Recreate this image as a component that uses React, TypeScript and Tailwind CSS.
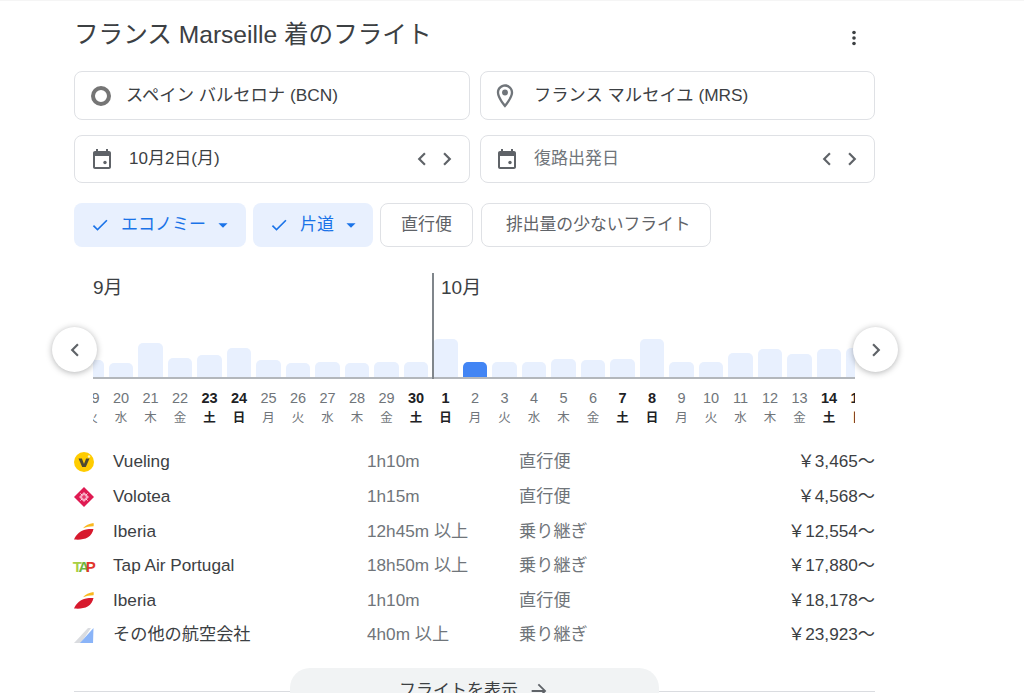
const FONT = "font-['Liberation_Sans','Noto_Sans_CJK_JP',sans-serif]";

const days = [
  { d: "19", w: "火", h: 17 },
  { d: "20", w: "水", h: 14 },
  { d: "21", w: "木", h: 34 },
  { d: "22", w: "金", h: 19 },
  { d: "23", w: "土", h: 22, bold: true },
  { d: "24", w: "日", h: 29, bold: true },
  { d: "25", w: "月", h: 17 },
  { d: "26", w: "火", h: 14 },
  { d: "27", w: "水", h: 15 },
  { d: "28", w: "木", h: 14 },
  { d: "29", w: "金", h: 15 },
  { d: "30", w: "土", h: 15, bold: true },
  { d: "1", w: "日", h: 38, bold: true },
  { d: "2", w: "月", h: 15, active: true },
  { d: "3", w: "火", h: 15 },
  { d: "4", w: "水", h: 15 },
  { d: "5", w: "木", h: 18 },
  { d: "6", w: "金", h: 17 },
  { d: "7", w: "土", h: 18, bold: true },
  { d: "8", w: "日", h: 38, bold: true },
  { d: "9", w: "月", h: 15 },
  { d: "10", w: "火", h: 15 },
  { d: "11", w: "水", h: 24 },
  { d: "12", w: "木", h: 28 },
  { d: "13", w: "金", h: 23 },
  { d: "14", w: "土", h: 28, bold: true },
  { d: "15", w: "日", h: 29, bold: true },
];

const flights = [
  { logo: <VuelingLogo />, name: "Vueling", time: "1h10m", stops: "直行便", price: "￥3,465〜" },
  { logo: <VoloteaLogo />, name: "Volotea", time: "1h15m", stops: "直行便", price: "￥4,568〜" },
  { logo: <IberiaLogo />, name: "Iberia", time: "12h45m 以上", stops: "乗り継ぎ", price: "￥12,554〜" },
  { logo: <TapLogo />, name: "Tap Air Portugal", time: "18h50m 以上", stops: "乗り継ぎ", price: "￥17,880〜" },
  { logo: <IberiaLogo />, name: "Iberia", time: "1h10m", stops: "直行便", price: "￥18,178〜" },
  { logo: <OtherLogo />, name: "その他の航空会社", time: "4h0m 以上", stops: "乗り継ぎ", price: "￥23,923〜" },
];

function VuelingLogo() {
  return (
    <svg width="20" height="20" viewBox="0 0 20 20">
      <circle cx="10" cy="10" r="10" fill="#fc0" />
      <path d="M4.500 6.500h3.400l2.100 5.600 2.100-5.600h3.400L11.800 15H8.200z" fill="#4d4a32" />
      <circle cx="15" cy="4.500" r="1.200" fill="#fff4bf" />
    </svg>
  );
}

function VoloteaLogo() {
  return (
    <svg width="20" height="20" viewBox="0 0 20 20">
      <path d="M10 0l10 10-10 10L0 10z" fill="#df1a52" />
      <path d="M10 5l5 5-5 5-5-5z" fill="#f7a8c0" />
      <path d="M10 7.800l2.200 2.200-2.200 2.200L7.800 10z" fill="#e8386c" />
      <path d="M6.500 6.500l1.200 1.200M13.500 6.500l-1.200 1.200M6.500 13.500l1.200-1.200M13.500 13.500l-1.200-1.200" stroke="#fff" strokeWidth="1" />
    </svg>
  );
}

function IberiaLogo() {
  return (
    <svg width="20" height="17" viewBox="0 0 20 17">
      <path d="M0 16.500C2 11.500 6.500 7.500 12 6.500c2.500-.5 5-.6 7.500-.5-.8 3.500-2.500 6.500-5.500 8.300-4 2.400-9 2.600-14 2.200z" fill="#d7192d" />
      <path d="M9 5.300C11.500 2.500 15 .6 19.500 0c.3 1 .3 2.200.1 3.200C15.500 3.200 12 4 9 5.300z" fill="#fab81e" />
    </svg>
  );
}

function TapLogo() {
  return (
    <span className="flex text-[15px] font-bold leading-none tracking-[-3.500px] pr-[3px]">
      <span className="text-[#a8cf45]">T</span>
      <span className="text-[#6fb53f]">A</span>
      <span className="text-[#e2372b]">P</span>
    </span>
  );
}

function OtherLogo() {
  return (
    <svg width="20" height="15" viewBox="0 0 20 15">
      <path d="M0 15L14 0h3L7 15z" fill="#dadce0" />
      <path d="M6 15L19.500 0 19 15z" fill="#8ab4f8" />
    </svg>
  );
}

function CalendarIcon() {
  return (
    <svg width="24" height="24" viewBox="0 0 24 24" fill="#5f6368" className="shrink-0">
      <path d="M19 4h-1V2h-2v2H8V2H6v2H5c-1.100 0-2 .9-2 2v14c0 1.100.9 2 2 2h14c1.100 0 2-.9 2-2V6c0-1.100-.9-2-2-2zm0 16H5V9h14v11z" />
      <circle cx="15" cy="15.500" r="1.700" />
    </svg>
  );
}

function Chevron({ right }: { right?: boolean }) {
  return (
    <svg width="26" height="26" viewBox="0 0 24 24" fill="#5f6368" className="shrink-0">
      <path d={right ? "M8.590 16.590L10 18l6-6-6-6-1.410 1.410L13.170 12z" : "M15.410 7.410L14 6l-6 6 6 6 1.410-1.410L10.830 12z"} />
    </svg>
  );
}

function Check() {
  return (
    <svg width="20" height="20" viewBox="0 0 24 24" fill="#1a73e8" className="shrink-0">
      <path d="M9 16.170L4.830 12l-1.420 1.410L9 19 21 7l-1.410-1.410z" />
    </svg>
  );
}

function Caret() {
  return (
    <svg width="22" height="22" viewBox="0 0 24 24" fill="#1a73e8" className="shrink-0">
      <path d="M7 10l5 5 5-5z" />
    </svg>
  );
}

function DateField({ label, placeholder, w, pl }: { label: string; placeholder?: boolean; w: string; pl: string }) {
  return (
    <div className={`${w} ${pl} h-[48px] flex items-center border border-[#dfe1e5] rounded-lg pr-[9px]`}>
      <CalendarIcon />
      <span className={`ml-[15px] text-[17px] ${placeholder ? "text-[#70757a]" : "text-[#3c4043]"}`}>{label}</span>
      <div className="ml-auto flex items-center -space-x-px">
        <Chevron />
        <Chevron right />
      </div>
    </div>
  );
}

function ActiveChip({ label, w }: { label: string; w: string }) {
  return (
    <div className={`${w} h-[44px] flex items-center bg-[#e8f0fe] rounded-lg pl-[16px] text-[#1a73e8] text-[17px]`}>
      <Check />
      <span className="ml-[11px]">{label}</span>
      <span className="ml-[6px]"><Caret /></span>
    </div>
  );
}

function NavButton({ right }: { right?: boolean }) {
  return (
    <div className={`absolute top-[54px] ${right ? "left-[779px]" : "left-[-22px]"} w-[45px] h-[45px] rounded-full bg-white shadow-[0_1px_6px_rgba(32,33,36,0.35)] flex items-center justify-center`}>
      <Chevron right={right} />
    </div>
  );
}

export default function App() {
  return (
    <div className={`${FONT} w-full h-[693px] overflow-hidden bg-white border-t border-[#f5f5f5]`}>
      <div className="ml-[74px] w-[801px]">
        <div className="h-[70px] flex items-start justify-between">
          <h1 className="mt-[20px] text-[24.600px] leading-[28px] text-[#3c4043] font-normal">フランス Marseille 着のフライト</h1>
          <svg width="24" height="24" viewBox="0 0 24 24" fill="#3c4043" className="mt-[25px] mr-[9px]">
            <circle cx="12" cy="6.500" r="1.800" />
            <circle cx="12" cy="12" r="1.800" />
            <circle cx="12" cy="17.500" r="1.800" />
          </svg>
        </div>

        <div className="flex gap-[10px]">
          <div className="w-[396px] h-[49px] flex items-center border border-[#dfe1e5] rounded-lg pl-[16px]">
            <span className="w-[20px] h-[20px] rounded-full border-[4px] border-[#757575] shrink-0" />
            <span className="ml-[15px] text-[17.300px] text-[#3c4043]">スペイン バルセロナ (BCN)</span>
          </div>
          <div className="w-[395px] h-[49px] flex items-center border border-[#dfe1e5] rounded-lg pl-[10px]">
            <svg width="28" height="28" viewBox="0 0 24 24" fill="#70757a" className="shrink-0">
              <path d="M12 2C8.130 2 5 5.130 5 9c0 5.250 7 13 7 13s7-7.750 7-13c0-3.870-3.130-7-7-7zm0 2c2.760 0 5 2.240 5 5 0 2.880-2.880 7.190-5 9.880C9.920 16.210 7 11.850 7 9c0-2.760 2.240-5 5-5z" />
              <circle cx="12" cy="9" r="2.500" />
            </svg>
            <span className="ml-[15px] text-[17.300px] text-[#3c4043]">フランス マルセイユ (MRS)</span>
          </div>
        </div>

        <div className="flex gap-[10px] mt-[15px]">
          <DateField label="10月2日(月)" w="w-[396px]" pl="pl-[15px]" />
          <DateField label="復路出発日" placeholder w="w-[395px]" pl="pl-[14px]" />
        </div>

        <div className="flex gap-[7px] mt-[20px]">
          <ActiveChip label="エコノミー" w="w-[172px]" />
          <ActiveChip label="片道" w="w-[120px]" />
          <div className="h-[44px] flex items-center px-[20px] border border-[#dfe1e5] rounded-lg text-[17px] text-[#5f6368]">直行便</div>
          <div className="h-[44px] flex items-center pl-[24px] pr-[19px] border border-[#dfe1e5] rounded-lg text-[16.800px] text-[#5f6368] ml-[1px]">排出量の少ないフライト</div>
        </div>

        <div className="relative mt-[26px] h-[172px]">
          <NavButton />
          <NavButton right />
          <div className="absolute left-[358px] top-0 h-[106px] w-[2px] bg-[#80868b]" />
          <div className="ml-[19px] w-[762px] overflow-hidden">
            <div className="h-[64px] flex pt-[4px] text-[19px] leading-[22px] text-[#3c4043]">
              <span className="w-[348px]">9月</span>
              <span>10月</span>
            </div>
            <div className="h-[42px] flex items-end border-b-2 border-[#b3b7bc]">
              <div className="flex items-end ml-[-16.250px]">
                {days.map(day => (
                  <div key={day.d + day.w} className="w-[29.500px] shrink-0 px-[2.500px]">
                    <div
                      className={`rounded-t-[5px] ${day.active ? "bg-[#4285f4]" : "bg-[#e8f0fe]"}`}
                      style={{ height: day.h }}
                    />
                  </div>
                ))}
              </div>
            </div>
            <div className="flex ml-[-16.250px] mt-[9px]">
              {days.map(day => (
                <div
                  key={day.d + day.w}
                  className={`w-[29.500px] shrink-0 text-center ${day.bold ? "font-bold text-[#202124]" : "text-[#70757a]"}`}
                >
                  <div className="text-[14.500px] leading-[20px]">{day.d}</div>
                  <div className="text-[12.500px] leading-[20px]">{day.w}</div>
                </div>
              ))}
            </div>
          </div>
        </div>

        <div>
          {flights.map((f, i) => (
            <div key={i} className="h-[34.600px] flex items-center text-[17.200px] text-[#3c4043]">
              <div className="w-[39px] flex justify-start">
                <div className="w-[20px] flex justify-center">{f.logo}</div>
              </div>
              <span className="w-[254px]">{f.name}</span>
              <span className="w-[152px] text-[#70757a]">{f.time}</span>
              <span className="text-[#70757a]">{f.stops}</span>
              <span className="ml-auto">{f.price}</span>
            </div>
          ))}
        </div>

        <div className="mt-[15px] h-[24px] flex justify-center items-start border-b border-[#dadce0]">
          <div className="w-[369px] h-[44px] shrink-0 rounded-t-[20px] bg-[#f1f3f4] flex justify-center items-center gap-[10px] pt-[3px] text-[17px] text-[#3c4043]">
            <span>フライトを表示</span>
            <svg width="22" height="22" viewBox="0 0 24 24" fill="#5f6368">
              <path d="M12 4l-1.410 1.410L16.170 11H4v2h12.170l-5.580 5.590L12 20l8-8z" />
            </svg>
          </div>
        </div>
      </div>
    </div>
  );
}
